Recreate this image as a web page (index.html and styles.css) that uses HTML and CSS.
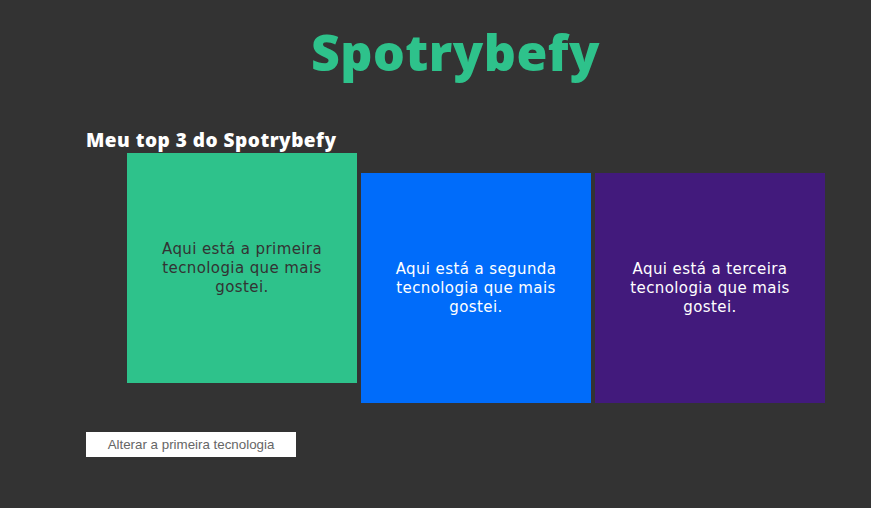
FILE: index.html
```html
<!DOCTYPE html>
<html lang="pt-BR">
<head>
<meta charset="utf-8">
<title>Spotrybefy</title>
<link rel="stylesheet" href="styles.css">
</head>
<body>
  <header class="header">
    <h1 class="logo">Spotrybefy</h1>
  </header>
  <main class="main">
    <h2 class="subtitle">Meu top 3 do Spotrybefy</h2>
    <div class="cards">
      <div class="card card-first">Aqui está a primeira tecnologia que mais gostei.</div>
      <div class="card card-second">Aqui está a segunda tecnologia que mais gostei.</div>
      <div class="card card-third">Aqui está a terceira tecnologia que mais gostei.</div>
    </div>
    <button class="btn" type="button">Alterar a primeira tecnologia</button>
  </main>
</body>
</html>
```
FILE: styles.css
```css
html, body {
  margin: 0;
  padding: 0;
}
body {
  background: #333333;
  width: 871px;
  height: 508px;
  font-family: "Open Sans", "DejaVu Sans", sans-serif;
}
.header {
  display: flex;
  justify-content: center;
  padding-top: 22px;
  padding-left: 40px;
}
.logo {
  margin: 0;
  color: #2ec28b;
  font-size: 50px;
  font-weight: 800;
  line-height: 60px;
  letter-spacing: 0.5px;
}
.main {
  padding-left: 86px;
  padding-top: 47px;
}
.subtitle {
  margin: 0;
  color: #ffffff;
  font-size: 19px;
  font-weight: 800;
  line-height: 22px;
  letter-spacing: 0.5px;
}
.cards {
  display: flex;
  align-items: flex-start;
  gap: 4px;
  margin-left: 41px;
  margin-top: 2px;
}
.card {
  width: 230px;
  height: 230px;
  box-sizing: border-box;
  padding: 0 24px;
  display: flex;
  align-items: center;
  justify-content: center;
  text-align: center;
  font-family: "DejaVu Sans", sans-serif;
  font-size: 15px;
  letter-spacing: 0.4px;
  line-height: 19px;
  color: #ffffff;
}
.card-first {
  background: #2ec28b;
  color: #333333;
}
.card-second {
  background: #006cfa;
  margin-top: 20px;
}
.card-third {
  background: #421a7c;
  margin-top: 20px;
}
.btn {
  display: block;
  margin-top: 29px;
  width: 210px;
  height: 25px;
  border: none;
  background: #ffffff;
  color: #666666;
  font-family: "Liberation Sans", Arial, sans-serif;
  font-size: 13.333px;
  padding: 0;
}
```
